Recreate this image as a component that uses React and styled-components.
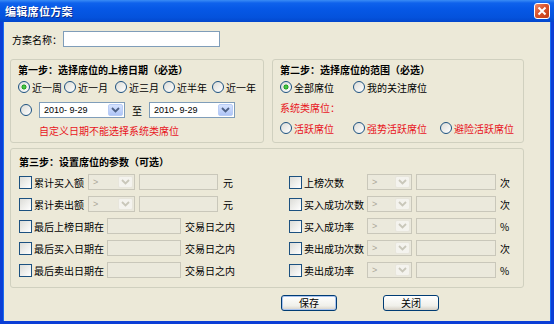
import styled, { createGlobalStyle } from "styled-components";

const GlobalStyle = createGlobalStyle`
  html, body {
    margin: 0;
    padding: 0;
    background: #ece9d8;
  }
  body {
    font-family: "Noto Sans CJK SC", "Noto Sans", sans-serif;
    font-size: 10px;
    color: #000;
  }
`;

const leftParams = [
  { label: "累计买入额", combo: true, unit: "元" },
  { label: "累计卖出额", combo: true, unit: "元" },
  { label: "最后上榜日期在", unit: "交易日之内" },
  { label: "最后买入日期在", unit: "交易日之内" },
  { label: "最后卖出日期在", unit: "交易日之内" },
];

const rightParams = [
  { label: "上榜次数", unit: "次" },
  { label: "买入成功次数", unit: "次" },
  { label: "买入成功率", unit: "%" },
  { label: "卖出成功次数", unit: "次" },
  { label: "卖出成功率", unit: "%" },
];

function Chevron({ disabled }) {
  return (
    <svg width="9" height="6" viewBox="0 0 9 6">
      <path
        d="M1 1 L4.5 4.5 L8 1"
        fill="none"
        stroke={disabled ? "#c9c7ba" : "#4d6185"}
        strokeWidth="1.8"
      />
    </svg>
  );
}

function Combo({ width, value, disabled }) {
  return (
    <ComboBox $w={width} $disabled={disabled}>
      <ComboText $disabled={disabled}>{value}</ComboText>
      <DropButton $disabled={disabled}>
        <Chevron disabled={disabled} />
      </DropButton>
    </ComboBox>
  );
}

function Radio({ checked, label, red }) {
  return (
    <RadioItem $red={red}>
      <RadioDot $checked={checked} />
      {label && <span>{label}</span>}
    </RadioItem>
  );
}

function ParamRow({ label, labelWidth, combo, comboWidth, boxWidth, unit, unitGap }) {
  return (
    <Row>
      <CheckBox />
      <CheckLabel $w={labelWidth}>{label}</CheckLabel>
      {combo && <Combo width={comboWidth} value=">" disabled />}
      <TextBox $w={boxWidth} $ml={combo ? 4 : 0} />
      <Unit $ml={unitGap}>{unit}</Unit>
    </Row>
  );
}

export default function App() {
  return (
    <>
      <GlobalStyle />
      <Window>
        <TitleBar>
          <TitleText>编辑席位方案</TitleText>
          <CloseButton>
            <svg width="10" height="10" viewBox="0 0 10 10">
              <path d="M1.5 1.5 L8.5 8.5 M8.5 1.5 L1.5 8.5" stroke="#fff" strokeWidth="2" />
            </svg>
          </CloseButton>
        </TitleBar>
        <Frame>
          <NameRow>
            <NameLabel>方案名称：</NameLabel>
            <NameInput />
          </NameRow>

          <StepsRow>
            <Group $w={254} $h={84}>
              <GroupTitle>第一步：选择席位的上榜日期（必选）</GroupTitle>
              <RadioGrid $cols="46px 51px 48px 49px auto" $mt={2}>
                <Radio checked label="近一周" />
                <Radio label="近一月" />
                <Radio label="近三月" />
                <Radio label="近半年" />
                <Radio label="近一年" />
              </RadioGrid>
              <DateRow>
                <Radio />
                <Combo width={86} value="2010- 9-29" />
                <DateSep>至</DateSep>
                <Combo width={86} value="2010- 9-29" />
              </DateRow>
              <RedNote $ml={21} $mt={6}>自定义日期不能选择系统类席位</RedNote>
            </Group>

            <Group $w={252} $h={84}>
              <GroupTitle>第二步：选择席位的范围（必选）</GroupTitle>
              <RadioGrid $cols="73px auto" $mt={2}>
                <Radio checked label="全部席位" />
                <Radio label="我的关注席位" />
              </RadioGrid>
              <RedNote $ml={0} $mt={6}>系统类席位：</RedNote>
              <RadioGrid $cols="73px 87px auto" $mt={5}>
                <Radio red label="活跃席位" />
                <Radio red label="强势活跃席位" />
                <Radio red label="避险活跃席位" />
              </RadioGrid>
            </Group>
          </StepsRow>

          <Group $w={514} $h={140} $mt={5} $pt={6} $pl={8}>
            <GroupTitle>第三步：设置席位的参数（可选）</GroupTitle>
            <ParamGrid>
              {leftParams.map((p, i) => (
                <Pair key={p.label}>
                  <ParamRow
                    label={p.label}
                    labelWidth={p.combo ? 54 : 73}
                    combo={p.combo}
                    comboWidth={47}
                    boxWidth={p.combo ? 79 : 74}
                    unit={p.unit}
                    unitGap={p.combo ? 5 : 4}
                  />
                  <ParamRow
                    label={rightParams[i].label}
                    labelWidth={63}
                    combo
                    comboWidth={45}
                    boxWidth={80}
                    unit={rightParams[i].unit}
                    unitGap={4}
                  />
                </Pair>
              ))}
            </ParamGrid>
          </Group>

          <ButtonRow>
            <Button $primary>保存</Button>
            <Button>关闭</Button>
          </ButtonRow>
        </Frame>
      </Window>
    </>
  );
}

const Window = styled.div`
  width: 554px;
  height: 324px;
  display: flex;
  flex-direction: column;
  overflow: hidden;
`;

const TitleBar = styled.div`
  height: 22px;
  flex: none;
  display: flex;
  align-items: center;
  justify-content: space-between;
  padding: 0 4px 0 5px;
  background: linear-gradient(
    #3a8cf5 0,
    #0f62ec 3px,
    #0658e6 40%,
    #0452dc 80%,
    #0346cc 100%
  );
`;

const TitleText = styled.span`
  color: #fff;
  font-size: 11px;
  font-weight: 700;
  letter-spacing: 0.3px;
  text-shadow: 1px 1px 0 #0a2a8c;
`;

const CloseButton = styled.div`
  width: 16px;
  height: 16px;
  box-sizing: border-box;
  border: 1px solid #fff;
  border-radius: 3px;
  display: flex;
  align-items: center;
  justify-content: center;
  background: linear-gradient(135deg, #f08a68, #d9532c 45%, #c23c14);
`;

const Frame = styled.div`
  flex: 1;
  display: flex;
  flex-direction: column;
  padding-left: 7px;
  background: #ece9d8;
  border: 3px solid #0b3ed6;
  border-top: none;
  box-shadow: inset 1px 0 0 #1a6cf0, inset -1px 0 0 #1a6cf0;
`;

const NameRow = styled.div`
  display: flex;
  align-items: center;
  margin-top: 9px;
  height: 16px;
`;

const NameLabel = styled.span`
  width: 51px;
  margin-left: 2px;
`;

const NameInput = styled.div`
  width: 157px;
  height: 16px;
  box-sizing: border-box;
  border: 1px solid #7f9db9;
  background: #fff;
`;

const StepsRow = styled.div`
  display: flex;
  gap: 8px;
  margin-top: 12px;
`;

const Group = styled.div`
  width: ${(p) => p.$w}px;
  height: ${(p) => p.$h}px;
  box-sizing: border-box;
  margin-top: ${(p) => p.$mt || 0}px;
  padding: ${(p) => p.$pt || 3}px 0 0 ${(p) => p.$pl || 7}px;
  border: 1px solid #d0d0bf;
  border-radius: 3px;
  display: flex;
  flex-direction: column;
  align-items: flex-start;
`;

const GroupTitle = styled.div`
  height: 14px;
  line-height: 14px;
  font-weight: 700;
`;

const RadioGrid = styled.div`
  display: grid;
  grid-template-columns: ${(p) => p.$cols};
  height: 16px;
  align-items: center;
  margin-top: ${(p) => p.$mt}px;
`;

const RadioItem = styled.label`
  display: flex;
  align-items: center;
  gap: 2px;
  white-space: nowrap;
  color: ${(p) => (p.$red ? "#e8141c" : "#000")};
`;

const RadioDot = styled.span`
  width: 12px;
  height: 12px;
  flex: none;
  box-sizing: border-box;
  border-radius: 50%;
  border: 1px solid #1c5180;
  background: ${(p) =>
    p.$checked
      ? "radial-gradient(circle, #5fd35a 0, #21a121 2.2px, transparent 2.8px), linear-gradient(135deg, #dcdcd7, #fff)"
      : "linear-gradient(135deg, #dcdcd7, #fff)"};
`;

const DateRow = styled.div`
  display: flex;
  align-items: center;
  gap: 7px;
  margin-top: 7px;
  padding-left: 2px;
`;

const DateSep = styled.span`
  width: 10px;
  text-align: center;
`;

const RedNote = styled.div`
  height: 14px;
  line-height: 14px;
  margin-top: ${(p) => p.$mt}px;
  margin-left: ${(p) => p.$ml}px;
  color: #e8141c;
`;

const ComboBox = styled.div`
  width: ${(p) => p.$w}px;
  height: 16px;
  flex: none;
  box-sizing: border-box;
  padding: 1px;
  display: flex;
  align-items: center;
  border: 1px solid ${(p) => (p.$disabled ? "#c9c7ba" : "#7f9db9")};
  background: ${(p) => (p.$disabled ? "#ebe9dc" : "#fff")};
`;

const ComboText = styled.span`
  flex: 1;
  padding-left: 3px;
  font-family: "Liberation Sans", sans-serif;
  font-size: 9px;
  color: ${(p) => (p.$disabled ? "#aca899" : "#000")};
  white-space: pre;
`;

const DropButton = styled.span`
  width: 15px;
  height: 12px;
  box-sizing: border-box;
  border-radius: 2px;
  display: flex;
  align-items: center;
  justify-content: center;
  border: 1px solid ${(p) => (p.$disabled ? "#e8e6dc" : "#b9cdf6")};
  background: ${(p) =>
    p.$disabled
      ? "#f4f3ee"
      : "linear-gradient(#d6e3fd, #bfd1fa 60%, #aec4f6)"};
`;

const ParamGrid = styled.div`
  display: grid;
  grid-template-columns: 270px auto;
  row-gap: 6px;
  margin-top: 5px;
`;

const Pair = styled.div`
  display: contents;
`;

const Row = styled.div`
  display: flex;
  align-items: center;
  height: 16px;
`;

const CheckBox = styled.span`
  width: 13px;
  height: 13px;
  flex: none;
  box-sizing: border-box;
  border: 1px solid #1c5180;
  background: linear-gradient(135deg, #dcdcd7, #fff);
`;

const CheckLabel = styled.span`
  width: ${(p) => p.$w}px;
  margin-left: 2px;
  white-space: nowrap;
`;

const TextBox = styled.span`
  width: ${(p) => p.$w}px;
  height: 16px;
  flex: none;
  box-sizing: border-box;
  margin-left: ${(p) => p.$ml}px;
  border: 1px solid #c9c7ba;
  background: #ebe9dc;
`;

const Unit = styled.span`
  margin-left: ${(p) => p.$ml}px;
  white-space: nowrap;
`;

const ButtonRow = styled.div`
  display: flex;
  gap: 46px;
  margin-top: 7px;
  padding-left: 271px;
`;

const Button = styled.button`
  width: 56px;
  height: 16px;
  padding: 0;
  font-family: inherit;
  font-size: 10px;
  line-height: 14px;
  color: #000;
  border: 1px solid #003c74;
  border-radius: 3px;
  background: linear-gradient(#ffffff, #f0f0ea 70%, #d6d0c5);
  box-shadow: ${(p) => (p.$primary ? "inset 0 0 0 1px #a9c3ee" : "none")};
`;
